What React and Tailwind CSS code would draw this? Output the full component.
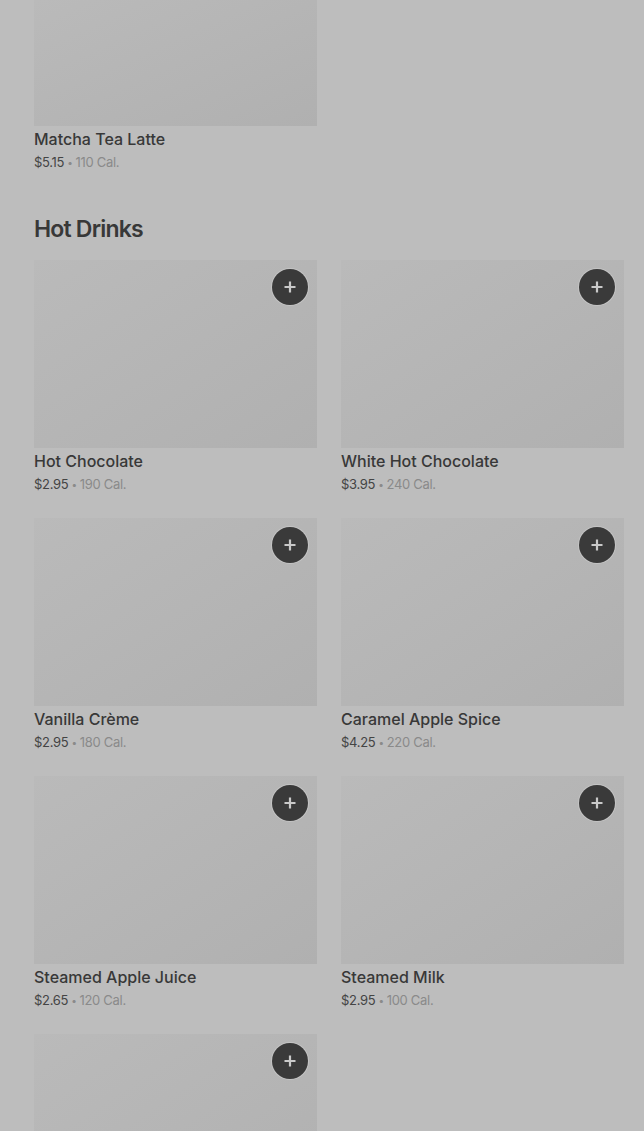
import React from "react";

const items = [
  { name: "Hot Chocolate", price: "$2.95", cal: "190 Cal." },
  { name: "White Hot Chocolate", price: "$3.95", cal: "240 Cal." },
  { name: "Vanilla Crème", price: "$2.95", cal: "180 Cal." },
  { name: "Caramel Apple Spice", price: "$4.25", cal: "220 Cal." },
  { name: "Steamed Apple Juice", price: "$2.65", cal: "120 Cal." },
  { name: "Steamed Milk", price: "$2.95", cal: "100 Cal." },
  { name: "", price: "", cal: "" },
];

const PlusButton = () => (
  <button className="absolute top-[9px] right-[9px] w-9 h-9 rounded-full bg-[#3a3a3a] ring-1 ring-[#c4c4c4] flex items-center justify-center">
    <svg width="14" height="14" viewBox="0 0 14 14">
      <path d="M7 1.5v11M1.5 7h11" stroke="#c9c9c9" strokeWidth="2.2" />
    </svg>
  </button>
);

const Price = ({ price, cal }) => (
  <div className="text-[13px] leading-[22px] tracking-[-0.3px] mt-[1px]">
    <span className="text-[#444]">{price}</span>
    <span className="text-[#8a8a8a] text-[10px] mx-[3px] align-[1px]">•</span>
    <span className="text-[#8a8a8a]">{cal}</span>
  </div>
);

const ItemCard = ({ item, showButton = true }) => (
  <div className="flex flex-col">
    <div className="relative h-[188px] bg-gradient-to-br from-[#bababa] to-[#b0b0b0]">
      {showButton && <PlusButton />}
    </div>
    {item.name && (
      <div className="pt-[2px]">
        <div className="text-[16px] leading-[22px] font-medium text-[#383838]">{item.name}</div>
        <Price price={item.price} cal={item.cal} />
      </div>
    )}
  </div>
);

export default function App() {
  return (
    <div
      className="h-[1131px] bg-[#bdbdbd] pl-[34px] pr-[20px] overflow-hidden"
      style={{ fontFamily: "Inter, 'Noto Sans', sans-serif" }}
    >
      {/* Previous section tail */}
      <div className="grid grid-cols-2 gap-x-6">
        <div className="flex flex-col">
          <div className="h-[126px] bg-gradient-to-br from-[#bababa] to-[#b0b0b0]" />
          <div className="pt-[2px]">
            <div className="text-[16px] leading-[22px] font-medium text-[#383838]">Matcha Tea Latte</div>
            <Price price="$5.15" cal="110 Cal." />
          </div>
        </div>
      </div>

      <h2 className="mt-[40px] text-[23px] leading-[32px] font-semibold tracking-[-0.8px] text-[#383838]">Hot Drinks</h2>

      <div className="mt-[15px] grid grid-cols-2 gap-x-6 gap-y-[23px]">
        {items.map((item, i) => (
          <ItemCard key={i} item={item} />
        ))}
      </div>
    </div>
  );
}
